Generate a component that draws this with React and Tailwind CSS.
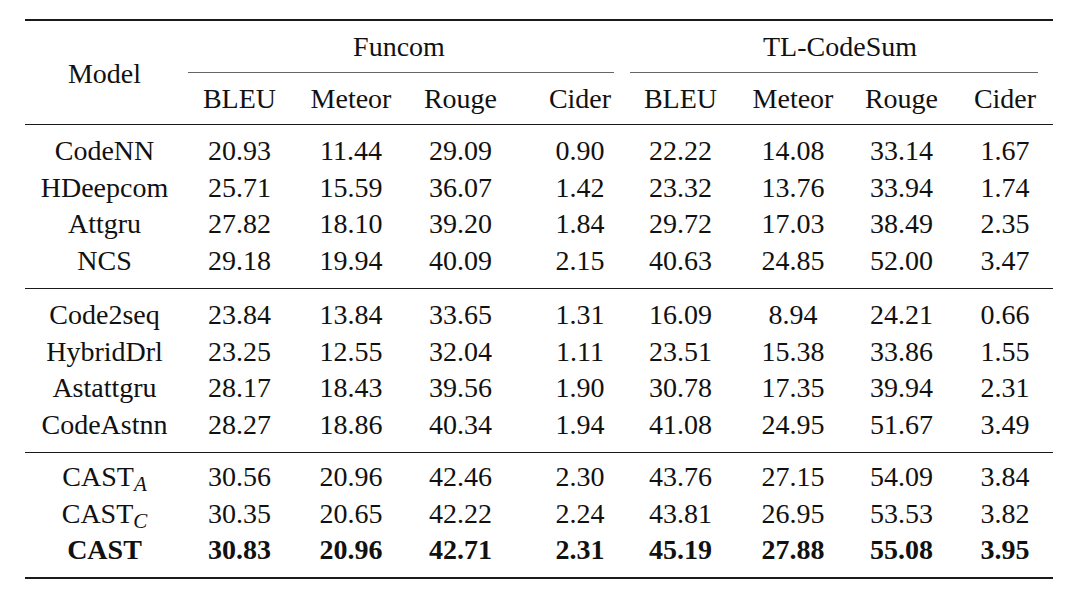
import React from "react";

const cols = "grid grid-cols-[147px_123px_110px_115px_110px_107px_110px_106px_100px]";

// small per-column nudges so each column's centre lines up with the original
const nudge = ["pl-[12px]", "pl-[12px]", "pl-[2px]", "pr-[4px]", "pl-[10px]", "pr-[6px]", "pl-[2px]", "pl-[3px]", "pl-[4px]"];

const groups = [
  [
    ["CodeNN", "20.93", "11.44", "29.09", "0.90", "22.22", "14.08", "33.14", "1.67"],
    ["HDeepcom", "25.71", "15.59", "36.07", "1.42", "23.32", "13.76", "33.94", "1.74"],
    ["Attgru", "27.82", "18.10", "39.20", "1.84", "29.72", "17.03", "38.49", "2.35"],
    ["NCS", "29.18", "19.94", "40.09", "2.15", "40.63", "24.85", "52.00", "3.47"],
  ],
  [
    ["Code2seq", "23.84", "13.84", "33.65", "1.31", "16.09", "8.94", "24.21", "0.66"],
    ["HybridDrl", "23.25", "12.55", "32.04", "1.11", "23.51", "15.38", "33.86", "1.55"],
    ["Astattgru", "28.17", "18.43", "39.56", "1.90", "30.78", "17.35", "39.94", "2.31"],
    ["CodeAstnn", "28.27", "18.86", "40.34", "1.94", "41.08", "24.95", "51.67", "3.49"],
  ],
  [
    [{ name: "CAST", sub: "A" }, "30.56", "20.96", "42.46", "2.30", "43.76", "27.15", "54.09", "3.84"],
    [{ name: "CAST", sub: "C" }, "30.35", "20.65", "42.22", "2.24", "43.81", "26.95", "53.53", "3.82"],
    [{ name: "CAST", bold: true }, "30.83", "20.96", "42.71", "2.31", "45.19", "27.88", "55.08", "3.95"],
  ],
];

const metrics = ["BLEU", "Meteor", "Rouge", "Cider", "BLEU", "Meteor", "Rouge", "Cider"];

function Row({ row }) {
  const [model, ...vals] = row;
  const bold = typeof model === "object" && model.bold;
  return (
    <div className={`${cols} h-[36.5px] leading-[36.5px] ${bold ? "font-bold" : ""}`}>
      <div className={`text-center ${nudge[0]}`}>
        {typeof model === "string" ? (
          model
        ) : (
          <>
            {model.name}
            {model.sub && <sub className="italic">{model.sub}</sub>}
          </>
        )}
      </div>
      {vals.map((v, i) => (
        <div key={i} className={`text-center ${nudge[i + 1]}`}>
          {v}
        </div>
      ))}
    </div>
  );
}

export default function App() {
  return (
    <div className="w-[1080px] h-[593px] bg-white overflow-hidden">
      <div className="ml-[25px] pt-[19px] w-[1028px] font-[family-name:'Liberation_Serif','Times_New_Roman',serif] text-[28px] text-[#111]">
        {/* header */}
        <div className={`${cols} grid-rows-[52px_51px] border-t-2 border-b border-[#1a1a1a]`}>
          <div className={`row-span-2 flex items-center justify-center pt-[2px] ${nudge[0]}`}>Model</div>
          <div className="col-span-4 px-[16px]">
            <div className="h-full border-b border-[#666] flex items-center justify-center pr-[4px]">Funcom</div>
          </div>
          <div className="col-span-4 pr-[15px]">
            <div className="h-full border-b border-[#666] flex items-center justify-center pl-[12px]">TL-CodeSum</div>
          </div>
          {metrics.map((m, i) => (
            <div key={i} className={`flex items-center justify-center ${nudge[i + 1]}`}>
              {m}
            </div>
          ))}
        </div>

        {/* body groups */}
        {groups.map((g, gi) => (
          <div
            key={gi}
            className={
              gi === groups.length - 1
                ? "pt-[6px] pb-[8px] border-b-2 border-[#1a1a1a]"
                : "pt-[8px] pb-[9px] border-b border-[#1a1a1a]"
            }
          >
            {g.map((r, ri) => (
              <Row key={ri} row={r} />
            ))}
          </div>
        ))}
      </div>
    </div>
  );
}
